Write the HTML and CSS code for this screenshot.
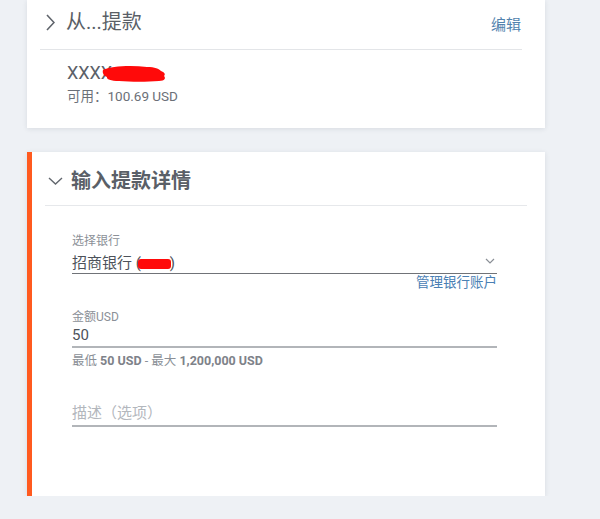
FILE: index.html
```html
<!DOCTYPE html>
<html lang="zh-CN">
<head>
<meta charset="utf-8">
<title>提款</title>
<link rel="stylesheet" href="styles.css">
</head>
<body>
<main class="page">
  <section class="card card-from">
    <div class="card-head">
      <svg class="chev-right" width="9" height="17" viewBox="0 0 9 17"><path d="M1 1 L8 8.5 L1 16" fill="none" stroke="#5f646b" stroke-width="1.6"/></svg>
      <h2 class="card-title">从...提款</h2>
      <a class="edit">编辑</a>
    </div>
    <div class="account">
      <div class="acct-name"><span class="masked">XXXX<svg class="scribble" width="66" height="20" viewBox="0 0 66 20"><path d="M2 6 C10 2 30 1 46 3 C54 3 58 5 60 7 C63 8 65 10 63 12 C65 14 64 17 58 17 C46 18 30 18 18 17 C10 17 5 15 6 13 C3 12 1 9 2 6 Z" fill="#ff0a0a"/></svg></span></div>
      <div class="acct-bal">可用：100.69 USD</div>
    </div>
  </section>

  <section class="card card-details">
    <div class="card-head card-head-lg">
      <svg class="chev-down" width="15" height="8" viewBox="0 0 15 8"><path d="M1 1 L7.5 7 L14 1" fill="none" stroke="#62676e" stroke-width="1.4"/></svg>
      <h2 class="card-title card-title-bold">输入提款详情</h2>
    </div>
    <form class="form">
      <div class="field field-bank">
        <div class="field-label">选择银行</div>
        <div class="select-row">
          <span class="select-value">招商银行 (<span class="blot"></span>)</span>
          <svg class="chev-small" width="10" height="6" viewBox="0 0 10 6"><path d="M1 1 L5 5 L9 1" fill="none" stroke="#8a8f96" stroke-width="1.2"/></svg>
        </div>
        <a class="manage">管理银行账户</a>
      </div>
      <div class="field field-amount">
        <div class="field-label field-label-tight">金额USD</div>
        <div class="input-row">50</div>
        <div class="hint">最低 <b>50 USD</b> - 最大 <b>1,200,000 USD</b></div>
      </div>
      <div class="field field-desc">
        <div class="input-row placeholder">描述（选项）</div>
      </div>
    </form>
  </section>
</main>
</body>
</html>
```
FILE: styles.css
```css
* { box-sizing: content-box; }
body {
  margin: 0;
  background: #eef1f5;
  font-family: Roboto, "Noto Sans CJK SC", sans-serif;
  color: #52575f;
}
.page {
  width: 518px;
  margin-left: 27px;
}
.card {
  background: #fff;
  box-shadow: 0 1px 5px rgba(30, 40, 60, 0.10);
}
.card-from {
  padding: 0 23px 0 13px;
}
.card-head {
  display: flex;
  align-items: center;
  height: 44px;
  padding: 0 1px 5px 6px;
  border-bottom: 1px solid #e3e5e8;
}
.card-title {
  margin: 0 0 0 11px;
  font-size: 20px;
  font-weight: 400;
  color: #5a5f67;
  line-height: 24px;
}
.edit {
  margin-left: auto;
  padding-top: 3px;
  font-size: 15px;
  color: #5283ae;
}
.account {
  padding: 12px 0 24px 27px;
}
.acct-name {
  font-size: 18px;
  line-height: 22px;
  color: #5b6068;
}
.masked {
  position: relative;
}
.scribble {
  position: absolute;
  left: 34px;
  top: 2px;
}
.acct-bal {
  margin-top: 4px;
  font-size: 13.5px;
  line-height: 16px;
  color: #6b7078;
}
.card-details {
  margin-top: 24px;
  border-left: 5px solid #ff5a1f;
  padding: 0 18px 69px 13px;
}
.card-head-lg {
  height: 48px;
  padding: 5px 0 0 3px;
  border-bottom: 1px solid #e6e8eb;
}
.card-title-bold {
  margin-left: 8px;
  font-weight: 700;
  color: #5a5f67;
}
.form {
  padding: 0 30px 0 27px;
}
.field-bank {
  margin-top: 27px;
}
.field-label {
  font-size: 12px;
  line-height: 16px;
  color: #8b9097;
}
.field-label-tight {
  line-height: 14px;
}
.select-row {
  display: flex;
  align-items: center;
  justify-content: space-between;
  height: 24px;
  border-bottom: 1px solid #707378;
  font-size: 15px;
  color: #4d525a;
}
.blot {
  display: inline-block;
  width: 33px;
  height: 10px;
  margin-left: -3px;
  margin-right: -1px;
  border-radius: 3px;
  background: #ff0a0a;
  vertical-align: -1px;
}
.chev-small {
  margin-right: 2px;
}
.manage {
  display: block;
  text-align: right;
  font-size: 13.5px;
  line-height: 17px;
  color: #4a80b4;
}
.field-amount {
  margin-top: 19px;
}
.input-row {
  height: 22px;
  line-height: 22px;
  font-size: 15px;
  color: #4d525a;
  border-bottom: 2px solid #b2b5b9;
}
.hint {
  margin-top: 5px;
  font-size: 12.5px;
  line-height: 16px;
  color: #8b9097;
}
.hint b {
  color: #7e8289;
  font-weight: 700;
}
.field-desc {
  margin-top: 32px;
}
.placeholder {
  height: 24px;
  line-height: 24px;
  color: #b3b7bd;
}
```
